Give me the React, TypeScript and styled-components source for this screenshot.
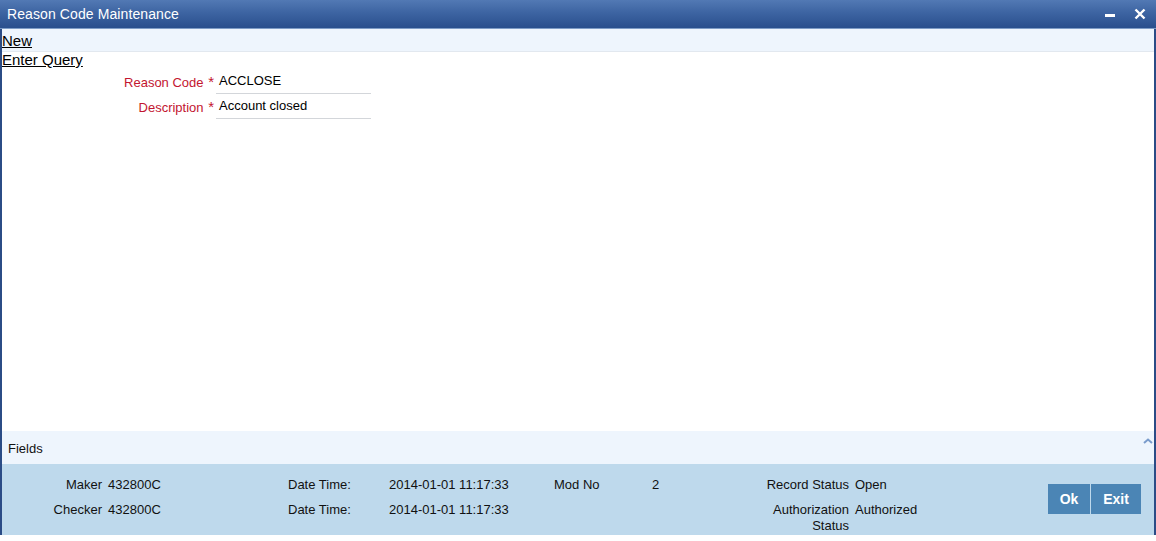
import { FunctionComponent } from 'react';
import styled, { createGlobalStyle } from 'styled-components';

const GlobalStyle = createGlobalStyle`
    html, body {
        margin: 0;
        padding: 0;
        background: #ffffff;
    }
    body {
        font-family: Arial, "Liberation Sans", sans-serif;
        font-size: 13px;
        color: #000;
    }
`;

const auditRows = [
    { label: 'Maker', value: '432800C', date: '2014-01-01 11:17:33' },
    { label: 'Checker', value: '432800C', date: '2014-01-01 11:17:33' },
];

const App: FunctionComponent = () => (
    <>
        <GlobalStyle />
        <Window>
            <TitleBar>
                <Title>Reason Code Maintenance</Title>
                <WindowControls>
                    <ControlIcon aria-label="minimize">
                        <svg width="11" height="11" viewBox="0 0 11 11">
                            <rect x="0" y="5" width="10" height="3" fill="#fff" />
                        </svg>
                    </ControlIcon>
                    <ControlIcon aria-label="close">
                        <svg width="12" height="12" viewBox="0 0 12 12">
                            <path d="M1.5 1.5 L10.5 10.5 M10.5 1.5 L1.5 10.5" stroke="#fff" strokeWidth="2.4" />
                        </svg>
                    </ControlIcon>
                </WindowControls>
            </TitleBar>

            <ActionBand>
                <ActionLink>New</ActionLink>
            </ActionBand>
            <ActionLink>Enter Query</ActionLink>

            <Form>
                <FieldLabel>
                    Reason Code <Required>*</Required>
                </FieldLabel>
                <FieldValue>ACCLOSE</FieldValue>
                <FieldLabel>
                    Description <Required>*</Required>
                </FieldLabel>
                <FieldValue>Account closed</FieldValue>
            </Form>

            <Spacer />

            <FieldsBand>
                <span>Fields</span>
                <Chevron viewBox="0 0 10 6" width="10" height="6">
                    <path d="M1 5 L5 1.5 L9 5" stroke="#7a9ccc" strokeWidth="2" fill="none" />
                </Chevron>
            </FieldsBand>

            <AuditArea>
                <AuditGrid>
                    {auditRows.map((row, i) => (
                        <AuditRow key={row.label}>
                            <AuditLabel>{row.label}</AuditLabel>
                            <AuditValue>{row.value}</AuditValue>
                            <AuditText>Date Time:</AuditText>
                            <AuditText>{row.date}</AuditText>
                            <AuditText>{i === 0 ? 'Mod No' : ''}</AuditText>
                            <AuditText>{i === 0 ? '2' : ''}</AuditText>
                            <AuditLabel>{i === 0 ? 'Record Status' : 'Authorization Status'}</AuditLabel>
                            <AuditValue>{i === 0 ? 'Open' : 'Authorized'}</AuditValue>
                        </AuditRow>
                    ))}
                </AuditGrid>
                <ButtonGroup>
                    <ActionButton $width={42}>Ok</ActionButton>
                    <ActionButton $width={50}>Exit</ActionButton>
                </ButtonGroup>
            </AuditArea>
        </Window>
    </>
);

export default App;

const Window = styled.div`
    display: flex;
    flex-direction: column;
    width: 1156px;
    height: 535px;
    box-sizing: border-box;
    border-left: 2px solid #2b4c86;
    border-right: 2px solid #2b4c86;
    background: #fff;
`;

const TitleBar = styled.div`
    display: flex;
    align-items: center;
    justify-content: space-between;
    height: 28px;
    margin: 0 -2px;
    padding: 0 8px 0 7px;
    background: linear-gradient(to bottom, #5279b4 0%, #3d64a2 45%, #2a4f8d 100%);
    border-bottom: 1px solid #7e9cc6;
`;

const Title = styled.span`
    color: #fff;
    font-size: 14px;
    letter-spacing: 0.1px;
`;

const WindowControls = styled.div`
    display: flex;
    align-items: center;
    gap: 18px;
    padding-right: 2px;
`;

const ControlIcon = styled.span`
    display: flex;
    align-items: center;
    height: 12px;
`;

const ActionBand = styled.div`
    height: 22px;
    background: #eef5fd;
    border-bottom: 1px solid #e2e8ef;
    display: flex;
    align-items: center;
`;

const ActionLink = styled.a`
    display: block;
    font-size: 15px;
    line-height: 15px;
    color: #000;
    text-decoration: underline;
    cursor: pointer;
    width: max-content;
`;

const Form = styled.div`
    display: grid;
    grid-template-columns: 214px 155px;
    grid-auto-rows: 25px;
    margin-top: 2px;
`;

const FieldLabel = styled.div`
    color: #c31530;
    text-align: right;
    font-size: 13px;
    line-height: 25px;
`;

const Required = styled.span`
    font-size: 15px;
    margin-left: 1px;
    margin-right: 2px;
`;

const FieldValue = styled.div`
    border-bottom: 1px solid #d3d6da;
    line-height: 24px;
    height: 24px;
    padding-left: 3px;
    font-size: 13px;
    color: #000;
`;

const Spacer = styled.div`
    flex: 1;
`;

const FieldsBand = styled.div`
    position: relative;
    height: 33px;
    background: #eef5fd;
    display: flex;
    align-items: center;
    padding-left: 6px;
    padding-top: 2px;
    box-sizing: border-box;
    font-size: 13px;
    color: #111;
`;

const Chevron = styled.svg`
    position: absolute;
    right: 1px;
    top: 7px;
`;

const AuditArea = styled.div`
    flex: 0 0 71px;
    background: #bed9ec;
    display: flex;
    align-items: flex-start;
`;

const AuditGrid = styled.div`
    display: flex;
    flex-direction: column;
    padding-top: 13px;
    width: 1046px;
`;

const AuditRow = styled.div`
    display: grid;
    grid-template-columns: 100px 186px 101px 165px 98px 100px 97px 1fr;
    align-items: start;
    min-height: 25px;
    font-size: 13px;
    line-height: 16px;
    color: #111;
`;

const AuditText = styled.span``;

const AuditLabel = styled.span`
    text-align: right;
`;

const AuditValue = styled.span`
    padding-left: 6px;
`;

const ButtonGroup = styled.div`
    display: flex;
    gap: 1px;
    margin-top: 20px;
`;

const ActionButton = styled.button<{ $width: number }>`
    width: ${({ $width }) => $width}px;
    height: 30px;
    border: none;
    background: #4b85b5;
    color: #fff;
    font-family: Arial, "Liberation Sans", sans-serif;
    font-weight: bold;
    font-size: 14px;
    padding: 0;
`;
